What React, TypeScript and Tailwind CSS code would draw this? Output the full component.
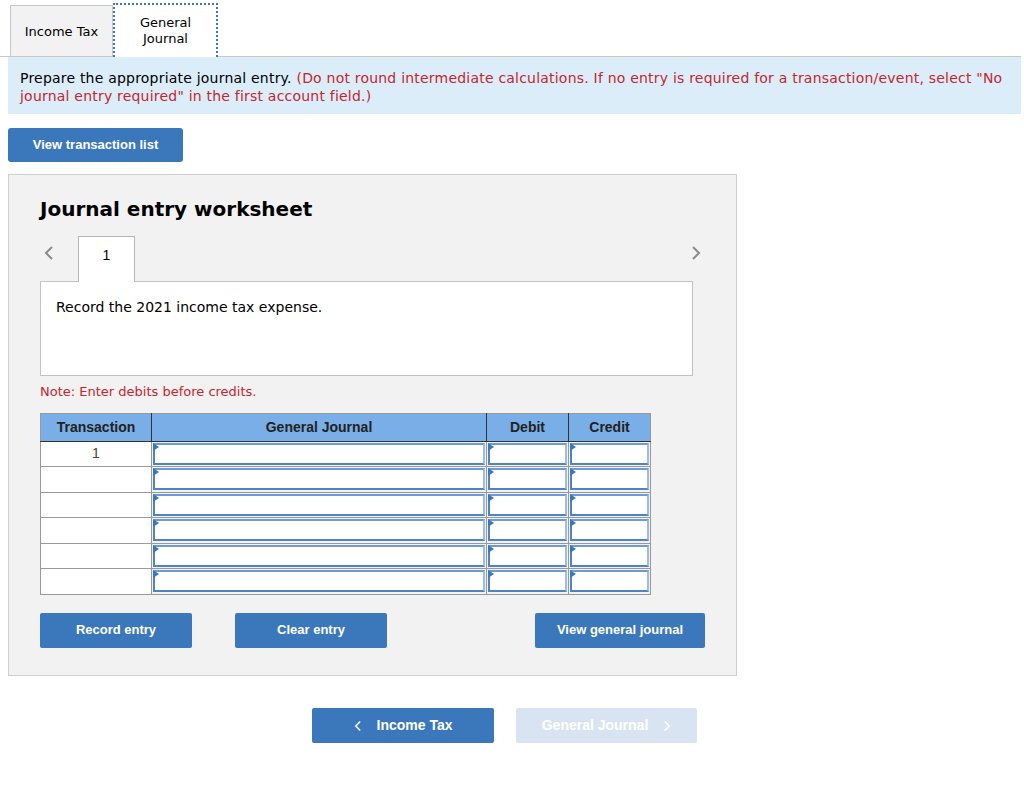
const verdana = "font-['DejaVu_Sans',Verdana,sans-serif]";
const arial = "font-['Liberation_Sans',Arial,sans-serif]";

function Chevron({ dir, className }: { dir: "left" | "right"; className?: string }) {
  return (
    <svg width="10" height="16" viewBox="0 0 10 16" className={className}>
      <path
        d={dir === "left" ? "M8 2 L2 8 L8 14" : "M2 2 L8 8 L2 14"}
        fill="none"
        stroke="currentColor"
        strokeWidth="2"
      />
    </svg>
  );
}

function InputCell() {
  return (
    <td className="border border-[#999] p-0 h-[25.5px]">
      <div className="relative h-full px-[1px] py-[1px]">
        <div className="h-[22px] w-full bg-white border-2 border-[#4f84c4] border-t-[#6d9bd3] border-r-[#9cbde6]" />
        <span className="absolute left-[1px] top-[1px] w-0 h-0 border-y-[4px] border-y-transparent border-l-[6px] border-l-[#3a77bb]" />
      </div>
    </td>
  );
}

export default function App() {
  const rows = ["1", "", "", "", "", ""];
  return (
    <div className={`min-h-screen bg-white ${verdana} text-black`}>
      {/* tabs */}
      <div className="flex items-end pl-[10px] pt-[3px] mr-[3px] border-b border-[#c8c8c8]">
        <div className="w-[103px] h-[51px] pt-[2px] bg-[#f2f2f2] border border-[#c8c8c8] border-b-0 flex items-center justify-center text-[13px]">
          Income Tax
        </div>
        <div className="w-[105px] h-[54px] bg-white border-2 border-dotted border-[#3a77bb] border-b-0 flex items-center justify-center text-center text-[13px] leading-[16px] -mb-px">
          General
          <br />
          Journal
        </div>
      </div>

      {/* instructions */}
      <div className="mx-[8px] mr-[3px] bg-[#dbedf9] px-[12px] pt-[12px] pb-[9px] text-[14px] leading-[18px] tracking-[0.21px]">
        Prepare the appropriate journal entry.{" "}
        <span className="text-[#c4262e]">
          (Do not round intermediate calculations. If no entry is required for a transaction/event, select "No
          journal entry required" in the first account field.)
        </span>
      </div>

      <div className="px-[8px] pt-[14px]">
        <button className={`w-[175px] h-[34px] rounded-[3px] bg-[#3a77bb] text-white text-[13px] font-bold ${arial}`}>
          View transaction list
        </button>
      </div>

      {/* worksheet */}
      <div className="mx-[8px] mt-[12px] w-[729px] h-[502px] bg-[#f2f2f2] border border-[#cfcfcf] px-[31px] pt-[22px]">
        <h2 className="text-[20px] font-bold leading-[24px]">Journal entry worksheet</h2>

        <div className="flex items-end mt-[15px] h-[45px] relative">
          <Chevron dir="left" className="text-[#8a8a8a] ml-[4px] mb-[20px]" />
          <div className={`ml-[24px] w-[57px] h-[46px] bg-white border border-[#b5b5b5] border-b-0 flex items-start justify-center pt-[8px] text-[14px] ${arial} relative z-10 -mb-px`}>
            1
          </div>
          <Chevron dir="right" className="text-[#8a8a8a] ml-auto mr-[4px] mb-[20px]" />
        </div>
        <div className="w-[653px] h-[95px] bg-white border border-[#c3c3c3] px-[15px] pt-[15px] text-[14px]">
          Record the 2021 income tax expense.
        </div>

        <div className="mt-[6px] text-[13px] text-[#c4262e]">Note: Enter debits before credits.</div>

        <table className={`mt-[11px] border-collapse ${arial} text-[14px]`}>
          <thead>
            <tr className="h-[28px] bg-[#7aaee6] text-[#222] font-bold">
              <th className="w-[111px] border border-[#999] border-r-[#333] border-b-[#333]">Transaction</th>
              <th className="w-[335px] border border-[#999] border-r-[#333] border-b-[#333]">General Journal</th>
              <th className="w-[82px] border border-[#999] border-r-[#333] border-b-[#333]">Debit</th>
              <th className="w-[82px] border border-[#999] border-b-[#333]">Credit</th>
            </tr>
          </thead>
          <tbody>
            {rows.map((r, i) => (
              <tr key={i} className="h-[25.5px]">
                <td className="border border-[#999] bg-white text-center text-[#444] align-top pt-[3px] leading-[16px]">
                  {r}
                </td>
                <InputCell />
                <InputCell />
                <InputCell />
              </tr>
            ))}
          </tbody>
        </table>

        <div className={`flex mt-[18px] ${arial} text-[13px] font-bold text-white`}>
          <button className="w-[152px] h-[35px] rounded-[2px] bg-[#3a77bb]">Record entry</button>
          <button className="ml-[43px] w-[152px] h-[35px] rounded-[2px] bg-[#3a77bb]">Clear entry</button>
          <button className="ml-[148px] w-[170px] h-[35px] rounded-[2px] bg-[#3a77bb]">View general journal</button>
        </div>
      </div>

      {/* bottom nav */}
      <div className={`flex mt-[32px] ml-[312px] ${arial} text-[14px] font-bold text-white`}>
        <button className="w-[182px] h-[35px] rounded-[2px] bg-[#3a77bb] flex items-center justify-center gap-[15px]">
          <Chevron dir="left" className="w-[8px] h-[12px]" />
          Income Tax
        </button>
        <button className="ml-[22px] w-[181px] h-[35px] rounded-[2px] bg-[#d9e4f2] flex items-center justify-center gap-[15px]">
          General Journal
          <Chevron dir="right" className="w-[8px] h-[12px]" />
        </button>
      </div>
    </div>
  );
}
